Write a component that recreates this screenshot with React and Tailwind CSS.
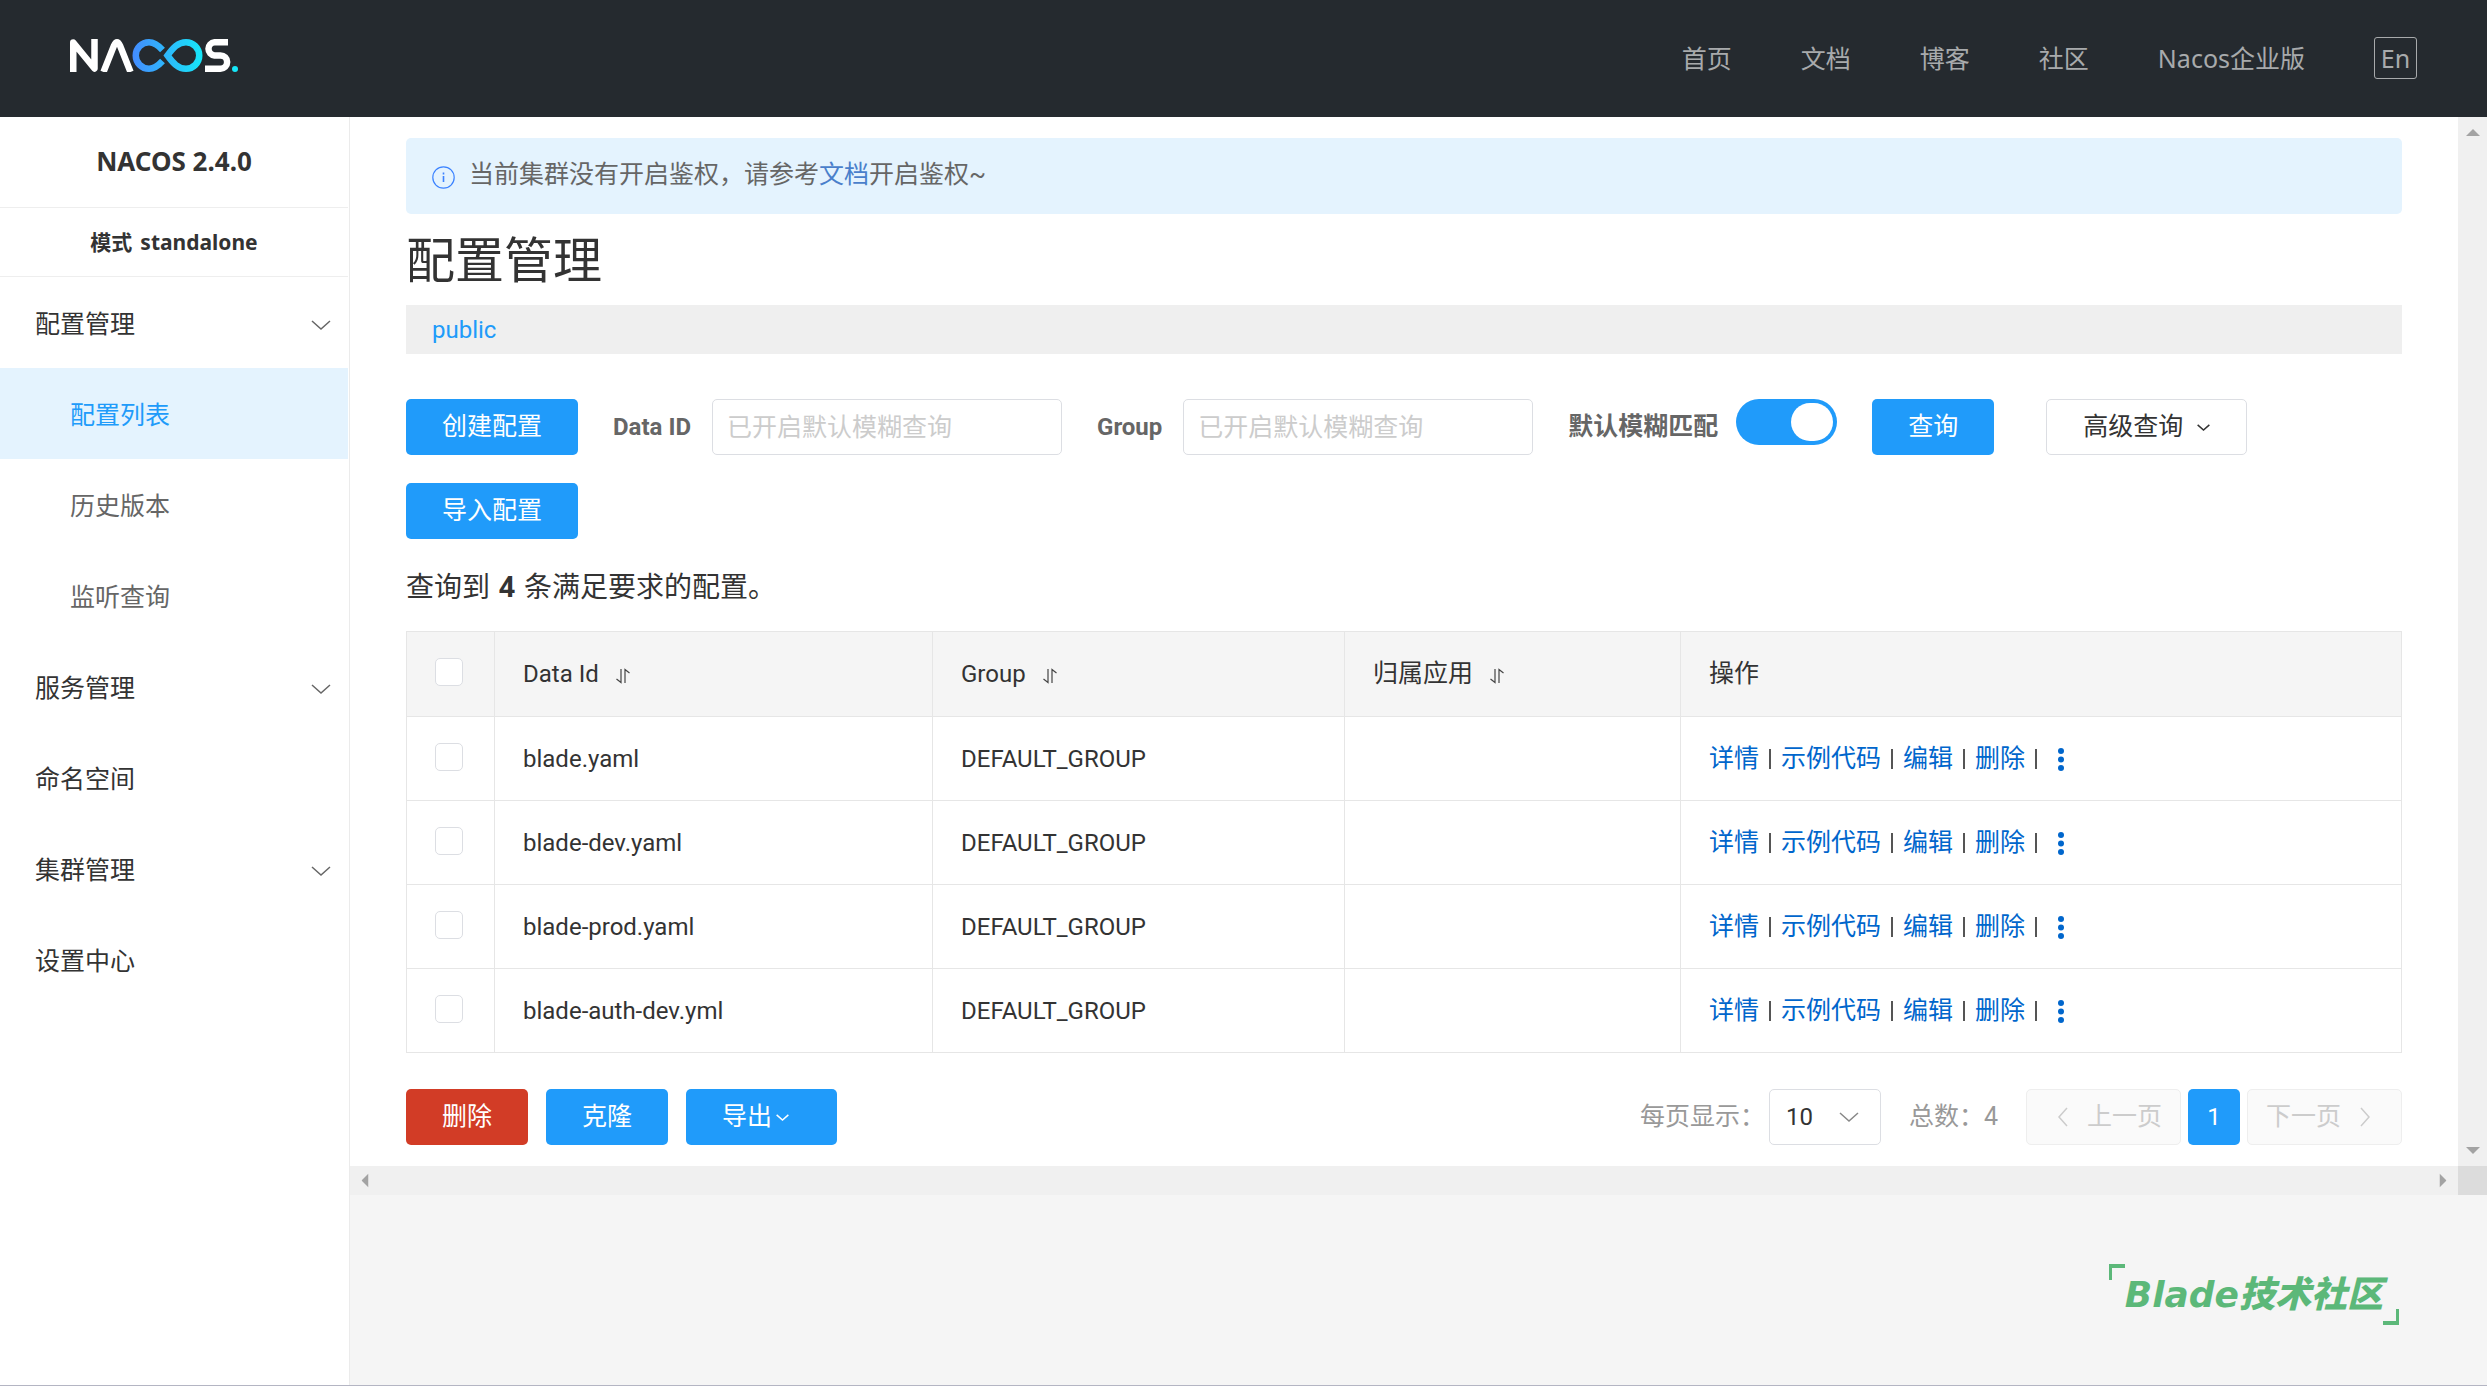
import { useState } from 'react'

const navLinks = ['首页', '文档', '博客', '社区', 'Nacos企业版']

const menu = [
  { label: '配置管理', children: ['配置列表', '历史版本', '监听查询'], expandable: true },
  { label: '服务管理', expandable: true },
  { label: '命名空间' },
  { label: '集群管理', expandable: true },
  { label: '设置中心' },
]

const configs = ['blade.yaml', 'blade-dev.yaml', 'blade-prod.yaml', 'blade-auth-dev.yml']

const actions = ['详情', '示例代码', '编辑', '删除']

function Chevron({ className }) {
  return (
    <svg
      className={className}
      viewBox="0 0 20 20"
      fill="none"
      stroke="currentColor"
      strokeWidth="1.5"
      aria-hidden="true"
    >
      <path d="m1 6 9 8 9-8" vectorEffect="non-scaling-stroke" />
    </svg>
  )
}

function SortIcon() {
  return (
    <svg className="mt-1 h-4 w-4" viewBox="0 0 16 16" fill="none" stroke="#444" strokeWidth="1.2" aria-hidden="true">
      <path d="M6 1v13.5L1.500 11M10 15V1.500L14.500 5" />
    </svg>
  )
}

function Logo() {
  return (
    <svg className="h-[33px] w-[168px]" viewBox="0 0 168 33" fill="none" role="img" aria-label="NACOS">
      <defs>
        <linearGradient id="loop" x1="62" y1="0" x2="132" y2="0" gradientUnits="userSpaceOnUse">
          <stop stopColor="#448bff" />
          <stop offset="1" stopColor="#16e6f8" />
        </linearGradient>
      </defs>
      <g stroke="#fff" strokeWidth="6.500">
        <path d="M3.250 33V3.500L24.500 29.500V0" strokeLinejoin="round" />
        <path d="M33.500 33 44 6.500Q47 0 50 6.500L60.500 33" />
        <path d="M158 3.250H144.500A6.600 6.600 0 0 0 144.500 16.400H150.500A6.600 6.600 0 0 1 150.500 29.700H135" />
      </g>
      <g stroke="url(#loop)" strokeWidth="6.500">
        <path d="M92.500 11C88 6 84.500 3.250 79 3.250A13.250 13.250 0 0 0 79 29.750C84.500 29.750 88 27 92.500 22" />
        <path d="M97.500 16.500C103 9 108 3.250 116 3.250A13.250 13.250 0 0 1 116 29.750C108 29.750 103 24 97.500 16.500Z" />
      </g>
      <circle cx="165" cy="30" r="3" fill="#16e6f8" />
    </svg>
  )
}

function Header() {
  return (
    <header className="flex h-[117px] items-center justify-between bg-[#252a2f] px-[70px]">
      <a href="#home" className="block pb-[6px]">
        <Logo />
      </a>
      <nav className="flex items-center gap-[69px] pb-[2px] font-['Noto_Sans','Noto_Sans_CJK_SC',sans-serif] text-[#a8aaac]">
        {navLinks.map((label) => (
          <a key={label} href="#nav">
            {label}
          </a>
        ))}
        <button type="button" className="h-[42px] w-[43px] rounded-[3px] border border-[#a8aaac] leading-9">
          En
        </button>
      </nav>
    </header>
  )
}

function Sidebar() {
  return (
    <aside className="flex w-[350px] shrink-0 flex-col border-r border-[#ebebeb] bg-white pr-px text-[#333]">
      <h2 className="flex h-[91px] items-center justify-center border-b border-[#eee] pb-[2px] font-['Noto_Sans',sans-serif] text-[26px] font-bold">
        NACOS 2.4.0
      </h2>
      <p className="flex h-[69px] items-center justify-center gap-2 border-b border-[#eee] font-['Noto_Sans','Noto_Sans_CJK_SC',sans-serif] text-[21px] font-bold">
        模式 <span>standalone</span>
      </p>
      <ul>
        {menu.map((item) => (
          <li key={item.label}>
            <button type="button" className="flex h-[91px] w-full items-center justify-between pt-1 pr-[17px] pl-[35px]">
              {item.label}
              {item.expandable && <Chevron className="h-5 w-5 text-[#666]" />}
            </button>
            {item.children && (
              <ul>
                {item.children.map((child, i) => (
                  <li key={child}>
                    <a
                      href="#menu"
                      className={
                        i === 0
                          ? 'flex h-[91px] items-center bg-[#e4f3fe] pt-1 pl-[70px] text-[#209bfa]'
                          : 'flex h-[91px] items-center pt-1 pl-[70px] text-[#666]'
                      }
                    >
                      {child}
                    </a>
                  </li>
                ))}
              </ul>
            )}
          </li>
        ))}
      </ul>
    </aside>
  )
}

function Notice() {
  return (
    <div className="flex h-[76px] items-center gap-[14px] rounded-[5px] bg-[#e4f3fe] px-[26px] pb-[2px] text-[#666]">
      <svg className="mt-1 h-[23px] w-[23px]" viewBox="0 0 23 23" fill="none" stroke="#3c83ff" aria-hidden="true">
        <circle cx="11.500" cy="11.500" r="10.700" strokeWidth="1.200" />
        <path d="M11.500 6.500v2M11.500 10v6" strokeWidth="1.600" />
      </svg>
      <p>
        当前集群没有开启鉴权，请参考
        <a href="#docs" className="text-[#4a7fcb]">
          文档
        </a>
        开启鉴权~
      </p>
    </div>
  )
}

function PrimaryButton({ children, className = 'bg-[#209bfa] px-9' }) {
  return (
    <button type="button" className={`flex h-14 items-center rounded-[5px] text-white ${className}`}>
      {children}
    </button>
  )
}

function SearchField({ id, label }) {
  return (
    <div className="flex items-center gap-[21px]">
      <label htmlFor={id} className="text-[24px] font-bold text-[#666]">
        {label}
      </label>
      <input
        id={id}
        type="text"
        placeholder="已开启默认模糊查询"
        className="h-14 w-[350px] rounded-[5px] border border-[#dcdee3] px-[14px] placeholder:text-[#ccc]"
      />
    </div>
  )
}

function SearchForm() {
  const [fuzzy, setFuzzy] = useState(true)

  return (
    <form className="mt-[45px] flex flex-wrap items-start gap-y-7" onSubmit={(e) => e.preventDefault()}>
      <div className="mr-[35px]">
        <PrimaryButton>创建配置</PrimaryButton>
      </div>
      <div className="mr-[35px]">
        <SearchField id="data-id" label="Data ID" />
      </div>
      <div className="mr-[35px]">
        <SearchField id="group" label="Group" />
      </div>
      <div className="mr-[35px] flex gap-[18px]">
        <label htmlFor="fuzzy" className="leading-[56px] font-bold text-[#666]">
          默认模糊匹配
        </label>
        <input
          id="fuzzy"
          type="checkbox"
          role="switch"
          checked={fuzzy}
          onChange={(e) => setFuzzy(e.target.checked)}
          className="h-[46px] w-[101px] appearance-none rounded-full bg-[#ccc] p-1 before:block before:h-[38px] before:w-[42px] before:rounded-full before:bg-white checked:bg-[#209bfa] checked:before:ml-auto"
        />
      </div>
      <div className="mr-[52px]">
        <PrimaryButton>查询</PrimaryButton>
      </div>
      <button
        type="button"
        className="flex h-14 items-center gap-[14px] rounded-[5px] border border-[#dcdee3] px-9 text-[#333]"
      >
        高级查询
        <Chevron className="h-[13px] w-[13px]" />
      </button>
      <div className="w-full">
        <PrimaryButton>导入配置</PrimaryButton>
      </div>
    </form>
  )
}

function Checkbox({ label }) {
  return (
    <input
      type="checkbox"
      aria-label={label}
      className="mb-1 block h-7 w-7 appearance-none rounded-[5px] border border-[#dcdee3] bg-white checked:bg-[#209bfa]"
    />
  )
}

function ConfigTable() {
  return (
    <table className="mt-[22px] w-full table-fixed border-collapse text-left text-[#333] [&_td]:border [&_td]:border-[#e6e6e6] [&_td]:px-7 [&_th]:border [&_th]:border-[#e6e6e6] [&_th]:px-7 [&_th]:font-normal">
      <colgroup>
        <col className="w-[88px]" />
        <col className="w-[438px]" />
        <col className="w-[412px]" />
        <col className="w-[336px]" />
        <col />
      </colgroup>
      <thead>
        <tr className="h-[85px] bg-[#f5f5f5]">
          <th>
            <Checkbox label="全选" />
          </th>
          <th>
            <span className="flex items-center gap-4 text-[24px]">
              Data Id <SortIcon />
            </span>
          </th>
          <th>
            <span className="flex items-center gap-4 text-[24px]">
              Group <SortIcon />
            </span>
          </th>
          <th>
            <span className="flex items-center gap-4">
              归属应用 <SortIcon />
            </span>
          </th>
          <th>操作</th>
        </tr>
      </thead>
      <tbody>
        {configs.map((name) => (
          <tr key={name} className="h-[84px]">
            <td>
              <Checkbox label={name} />
            </td>
            <td className="text-[24px]">{name}</td>
            <td className="text-[24px]">DEFAULT_GROUP</td>
            <td />
            <td>
              <div className="flex items-center">
                {actions.map((action) => (
                  <span key={action} className="flex items-center">
                    <a href="#action" className="text-[#06c]">
                      {action}
                    </a>
                    <span className="mx-[10px] h-5 w-[2px] bg-[#555]" />
                  </span>
                ))}
                <button type="button" aria-label="更多" className="ml-[10px] text-[#06c]">
                  <svg className="h-6 w-2" viewBox="0 0 8 24" fill="currentColor" aria-hidden="true">
                    <circle cx="4" cy="4" r="3" />
                    <circle cx="4" cy="12.500" r="3" />
                    <circle cx="4" cy="21" r="3" />
                  </svg>
                </button>
              </div>
            </td>
          </tr>
        ))}
      </tbody>
    </table>
  )
}

function Pagination() {
  const pageButton =
    'flex h-14 items-center gap-[14px] rounded-[5px] border border-[#eee] bg-[#fafafa] text-[#ccc]'

  return (
    <div className="flex items-center text-[#999]">
      <label htmlFor="page-size">每页显示：</label>
      <div className="relative ml-1 text-[#333]">
        <select
          id="page-size"
          defaultValue="10"
          className="h-14 w-28 appearance-none rounded-[5px] border border-[#dcdee3] bg-white pl-4 text-[24px]"
        >
          <option>10</option>
          <option>20</option>
          <option>50</option>
        </select>
        <Chevron className="pointer-events-none absolute top-[18px] right-[22px] h-5 w-5 text-[#888]" />
      </div>
      <span className="ml-7">总数：4</span>
      <button type="button" disabled className={`ml-7 pr-[18px] pl-[26px] ${pageButton}`}>
        <Chevron className="h-5 w-5 rotate-90" />
        上一页
      </button>
      <button type="button" className="mx-[7px] h-14 w-[52px] rounded-[5px] bg-[#209bfa] text-[24px] text-white">
        1
      </button>
      <button type="button" disabled className={`pr-[26px] pl-[18px] ${pageButton}`}>
        下一页
        <Chevron className="h-5 w-5 -rotate-90" />
      </button>
    </div>
  )
}

function Arrow({ className }) {
  return (
    <svg className={className} viewBox="0 0 14 7" fill="#a3a3a3" aria-hidden="true">
      <path d="M0 7 7 0l7 7z" />
    </svg>
  )
}

function Watermark() {
  return (
    <div className="mt-[69px] mr-[88px] ml-auto flex w-fit text-[#5cb879]">
      <span className="h-4 w-4 border-t-4 border-l-[3px]" />
      <span className="my-[11px] font-['DejaVu_Sans','Noto_Sans_CJK_SC',sans-serif] text-[36px] leading-[39px] font-black italic">
        Blade技术社区
      </span>
      <span className="h-4 w-4 self-end border-r-[3px] border-b-4" />
    </div>
  )
}

export default function App() {
  return (
    <div className="flex min-h-screen flex-col border-b border-[#b4b5c3] bg-[#f5f5f5] font-['Roboto','Noto_Sans_CJK_SC',sans-serif] text-[25px] leading-9">
      <Header />
      <div className="flex flex-1">
        <Sidebar />
        <div className="min-w-0 flex-1">
          <div className="grid grid-cols-[1fr_29px] grid-rows-[1fr_29px]">
            <main className="min-w-0 bg-white px-14 py-[21px]">
              <Notice />
              <h1 className="mt-[13px] text-[49px] leading-[70px] text-[#333]">配置管理</h1>
              <div className="mt-2 h-[49px] bg-[#efefef] px-[26px] text-[24px] leading-[50px] text-[#209bfa]">
                public
              </div>
              <SearchForm />
              <p className="mt-[26px] text-[28px] leading-[42px] text-[#333]">
                查询到 <strong className="mx-[2px] font-['Noto_Sans',sans-serif] font-bold">4</strong> 条满足要求的配置。
              </p>
              <ConfigTable />
              <div className="mt-9 flex items-center justify-between">
                <div className="flex gap-[18px]">
                  <PrimaryButton className="bg-[#d23c26] px-9">删除</PrimaryButton>
                  <PrimaryButton>克隆</PrimaryButton>
                  <PrimaryButton className="gap-1 bg-[#209bfa] pr-12 pl-9">
                    导出
                    <Chevron className="h-[13px] w-[13px]" />
                  </PrimaryButton>
                </div>
                <Pagination />
              </div>
            </main>
            <div className="flex flex-col items-center justify-between bg-[#f0f0f0] py-3">
              <Arrow className="h-[7px] w-[14px]" />
              <Arrow className="h-[7px] w-[14px] rotate-180" />
            </div>
            <div className="flex items-center justify-between bg-[#f0f0f0] px-2">
              <Arrow className="h-[7px] w-[14px] -rotate-90" />
              <Arrow className="h-[7px] w-[14px] rotate-90" />
            </div>
            <div className="bg-[#dcdcdc]" />
          </div>
          <Watermark />
        </div>
      </div>
    </div>
  )
}
